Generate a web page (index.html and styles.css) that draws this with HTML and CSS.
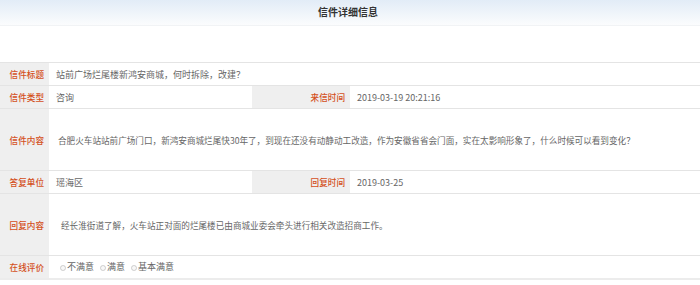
FILE: index.html
```html
<!DOCTYPE html>
<html lang="zh-CN">
<head>
    <meta charset="UTF-8">
    <title>信件详细信息</title>
    <link rel="stylesheet" href="styles.css">
</head>
<body>
    <div class="top-bar">
        <h1>信件详细信息</h1>
    </div>

    <table class="letter">
        <colgroup>
            <col class="c-label">
            <col class="c-value">
            <col class="c-label2">
            <col>
        </colgroup>
        <tr class="row-sm">
            <th>信件标题</th>
            <td colspan="3">站前广场烂尾楼新鸿安商城，何时拆除，改建？</td>
        </tr>
        <tr class="row-sm">
            <th>信件类型</th>
            <td>咨询</td>
            <th>来信时间</th>
            <td>2019-03-19 20:21:16</td>
        </tr>
        <tr class="row-lg">
            <th>信件内容</th>
            <td colspan="3" class="text">合肥火车站站前广场门口，新鸿安商城烂尾快30年了，到现在还没有动静动工改造，作为安徽省省会门面，实在太影响形象了，什么时候可以看到变化？</td>
        </tr>
        <tr class="row-sm">
            <th>答复单位</th>
            <td>瑶海区</td>
            <th>回复时间</th>
            <td>2019-03-25</td>
        </tr>
        <tr class="row-lg">
            <th>回复内容</th>
            <td colspan="3" class="text reply">经长淮街道了解，火车站正对面的烂尾楼已由商城业委会牵头进行相关改造招商工作。</td>
        </tr>
        <tr class="row-sm last">
            <th>在线评价</th>
            <td colspan="3" class="rating">
                <label><input type="radio" name="pj" disabled>不满意</label>
                <label><input type="radio" name="pj" disabled>满意</label>
                <label><input type="radio" name="pj" disabled>基本满意</label>
            </td>
        </tr>
    </table>
</body>
</html>
```

FILE: styles.css
```css
body {
    margin: 0;
    font-family: "Noto Sans CJK SC", "Liberation Sans", sans-serif;
    background: #fff;
    color: #666;
}
.top-bar {
    height: 25px;
    background: linear-gradient(to bottom, #e2ecf7, #fbfcfd);
    border-bottom: 1px solid #f1f3f5;
    margin-bottom: 36px;
}
.top-bar h1 {
    margin: 0;
    padding-left: 318px;
    font-size: 10px;
    line-height: 24px;
    color: #333;
    font-weight: bold;
}
.letter {
    width: 100%;
    border-collapse: collapse;
    font-size: 9px;
}
.c-label { width: 49px; }
.c-value { width: 203px; }
.c-label2 { width: 98px; }
.letter th {
    background: #efefef;
    color: #d4501c;
    font-size: 8.6px;
    font-weight: 500;
    text-align: right;
    padding: 0 5px 0 0;
    white-space: nowrap;
}
.letter td {
    padding: 0 0 0 7px;
}
.letter tr {
    border-top: 1px solid #e4e4e4;
}
.letter tr.last {
    border-bottom: 2px solid #ececec;
}
.row-sm { height: 23px; }
.row-lg { height: 62px; }
.letter td.text {
    padding-left: 9px;
    font-size: 8.6px;
}
.letter td.reply {
    padding-left: 12px;
}
.rating {
    font-size: 9px;
}
.rating input {
    width: 6px;
    height: 6px;
    margin: 0 1px 0 4px;
    vertical-align: -1px;
}
```
